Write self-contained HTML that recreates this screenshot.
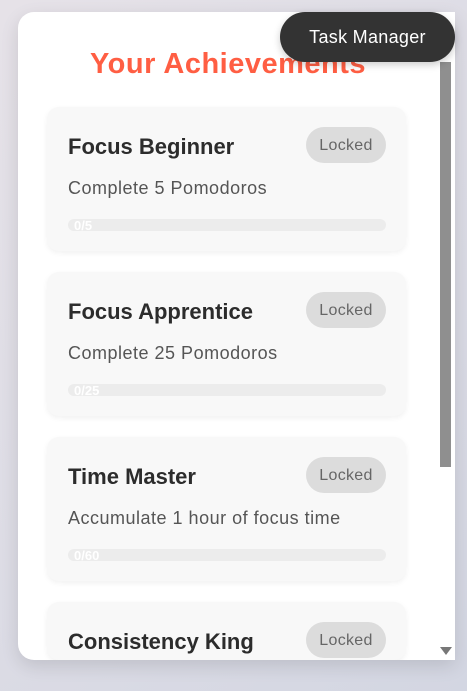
<!DOCTYPE html>
<html><head><style>
html,body{margin:0;width:467px;height:691px;overflow:hidden;font-family:"Liberation Sans",sans-serif;background:linear-gradient(135deg,#e6e2e8,#d3d6e2);}
.panel{position:absolute;left:18px;top:12px;width:437px;height:648px;background:#fff;border-radius:16px 0 0 16px;box-shadow:0 6px 18px rgba(0,0,0,.12);overflow:hidden;}
h1{position:absolute;left:0;width:420px;top:36px;margin:0;text-align:center;color:#ff5e43;font-size:29px;font-weight:bold;letter-spacing:.5px;}
.card{position:absolute;left:29px;width:359px;height:144px;background:#f8f8f8;border-radius:12px;box-shadow:0 2px 6px rgba(0,0,0,.06);}
.t{position:absolute;left:21px;top:27px;font-size:22px;font-weight:bold;color:#2c2c2c;}
.l{position:absolute;left:259px;top:20px;width:80px;height:36px;border-radius:18px;background:#dcdcdc;color:#666;font-size:16px;letter-spacing:.3px;text-align:center;line-height:37px;}
.d{position:absolute;left:21px;top:71px;font-size:18px;letter-spacing:.5px;color:#555;}
.b{position:absolute;left:21px;top:112px;width:318px;height:12px;border-radius:6px;background:#ececec;color:#fff;font-size:13px;font-weight:bold;line-height:13px;padding-left:6px;box-sizing:border-box;}
.sb{position:absolute;left:421px;top:0;width:16px;height:648px;background:#fff;}
.th{position:absolute;left:1px;top:50px;width:11px;height:405px;background:#8f8f8f;}
.ar{position:absolute;left:1px;top:635px;width:0;height:0;border-left:6px solid transparent;border-right:6px solid transparent;border-top:8px solid #777;}
.tm{position:absolute;left:280px;top:12px;width:175px;height:50px;border-radius:25px;background:#333;color:#fff;font-size:18px;letter-spacing:.3px;line-height:51px;text-align:center;box-shadow:0 3px 8px rgba(0,0,0,.2);}
</style></head><body>
<div class="panel">
<h1>Your Achievements</h1>
<div class="card" style="top:95px"><div class="t">Focus Beginner</div><div class="l">Locked</div><div class="d">Complete 5 Pomodoros</div><div class="b">0/5</div></div>
<div class="card" style="top:260px"><div class="t">Focus Apprentice</div><div class="l">Locked</div><div class="d">Complete 25 Pomodoros</div><div class="b">0/25</div></div>
<div class="card" style="top:425px"><div class="t">Time Master</div><div class="l">Locked</div><div class="d">Accumulate 1 hour of focus time</div><div class="b">0/60</div></div>
<div class="card" style="top:590px;height:58px"><div class="t">Consistency King</div><div class="l">Locked</div></div>
<div class="sb"><div class="th"></div><div class="ar"></div></div>
</div>
<div class="tm">Task Manager</div>
</body></html>
